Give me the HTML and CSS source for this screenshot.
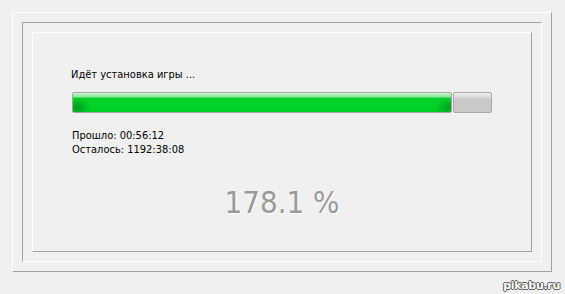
FILE: index.html
```html
<!DOCTYPE html>
<html lang="ru">
<head>
<meta charset="utf-8">
<link rel="stylesheet" href="styles.css">
</head>
<body>
<div class="frame outer">
  <div class="frame middle">
    <div class="frame inner">
      <div class="title">Идёт установка игры ...</div>
      <div class="bar">
        <div class="seg fill"></div>
        <div class="seg rest"></div>
      </div>
      <div class="times">
        <div>Прошло: 00:56:12</div>
        <div>Осталось: 1192:38:08</div>
      </div>
      <div class="percent">178.1 %</div>
    </div>
  </div>
</div>
<div class="watermark">pikabu.ru</div>
</body>
</html>
```
FILE: styles.css
```css
html, body {
  margin: 0;
  padding: 0;
  background: #f0f0f0;
  width: 565px;
  height: 294px;
  overflow: hidden;
}
body {
  position: relative;
  padding: 12px;
  box-sizing: border-box;
  font-family: "DejaVu Sans Condensed", "DejaVu Sans", sans-serif;
  font-size: 11px;
  color: #000;
}
.frame {
  box-sizing: border-box;
}
.outer {
  width: 540px;
  height: 260px;
  padding: 9px;
  border-top: 1px solid #fff;
  border-left: 1px solid #fff;
  border-right: 1px solid #a0a0a0;
  border-bottom: 1px solid #a0a0a0;
}
.middle {
  height: 240px;
  padding: 9px;
  border-top: 1px solid #a0a0a0;
  border-left: 1px solid #a0a0a0;
  border-right: 1px solid #fff;
  border-bottom: 1px solid #fff;
}
.inner {
  height: 220px;
  padding: 35px 39px 0 39px;
  border-top: 1px solid #fff;
  border-left: 1px solid #fff;
  border-right: 1px solid #a0a0a0;
  border-bottom: 1px solid #a0a0a0;
}
.title {
  line-height: 14px;
  padding-left: 0;
  margin-left: -1px;
}
.bar {
  display: flex;
  gap: 1px;
  height: 21px;
  margin-top: 10px;
}
.seg {
  box-sizing: border-box;
  height: 21px;
  border: 1px solid #a4a4a4;
  border-radius: 2px;
}
.fill {
  width: 380px;
  background:
    radial-gradient(ellipse 14px 9px at 4px 14px, rgba(0,110,20,0.55), rgba(0,110,20,0) 100%),
    radial-gradient(ellipse 14px 9px at 376px 14px, rgba(0,110,20,0.45), rgba(0,110,20,0) 100%),
    linear-gradient(to bottom, #d8f8d8 0px, #a6eda8 2px, #8ee894 4px, #06cf2a 5px, #00d42a 12px, #00cc28 19px);
}
.rest {
  width: 39px;
  background: linear-gradient(to bottom, #f0f0f0 0px, #e0e0e0 3px, #d6d6d6 5px, #c9c9c9 6px, #cacaca 19px);
  border-color: #a8a8a8;
}
.times {
  margin-top: 16px;
  line-height: 14px;
}
.percent {
  margin-top: 27px;
  text-align: center;
  font-family: "DejaVu Sans Condensed", "DejaVu Sans", sans-serif;
  font-size: 31px;
  line-height: 36px;
  color: #9a9a9a;
  text-shadow: 1px 1px 0 #ffffff;
}
.watermark {
  position: absolute;
  right: 5px;
  bottom: 2px;
  font-family: "DejaVu Sans", sans-serif;
  font-weight: bold;
  font-size: 11px;
  color: #fff;
  letter-spacing: -0.3px;
  text-shadow: 1px 0 0 #555, -1px 0 0 #555, 0 1px 0 #555, 0 -1px 0 #555;
}
```
